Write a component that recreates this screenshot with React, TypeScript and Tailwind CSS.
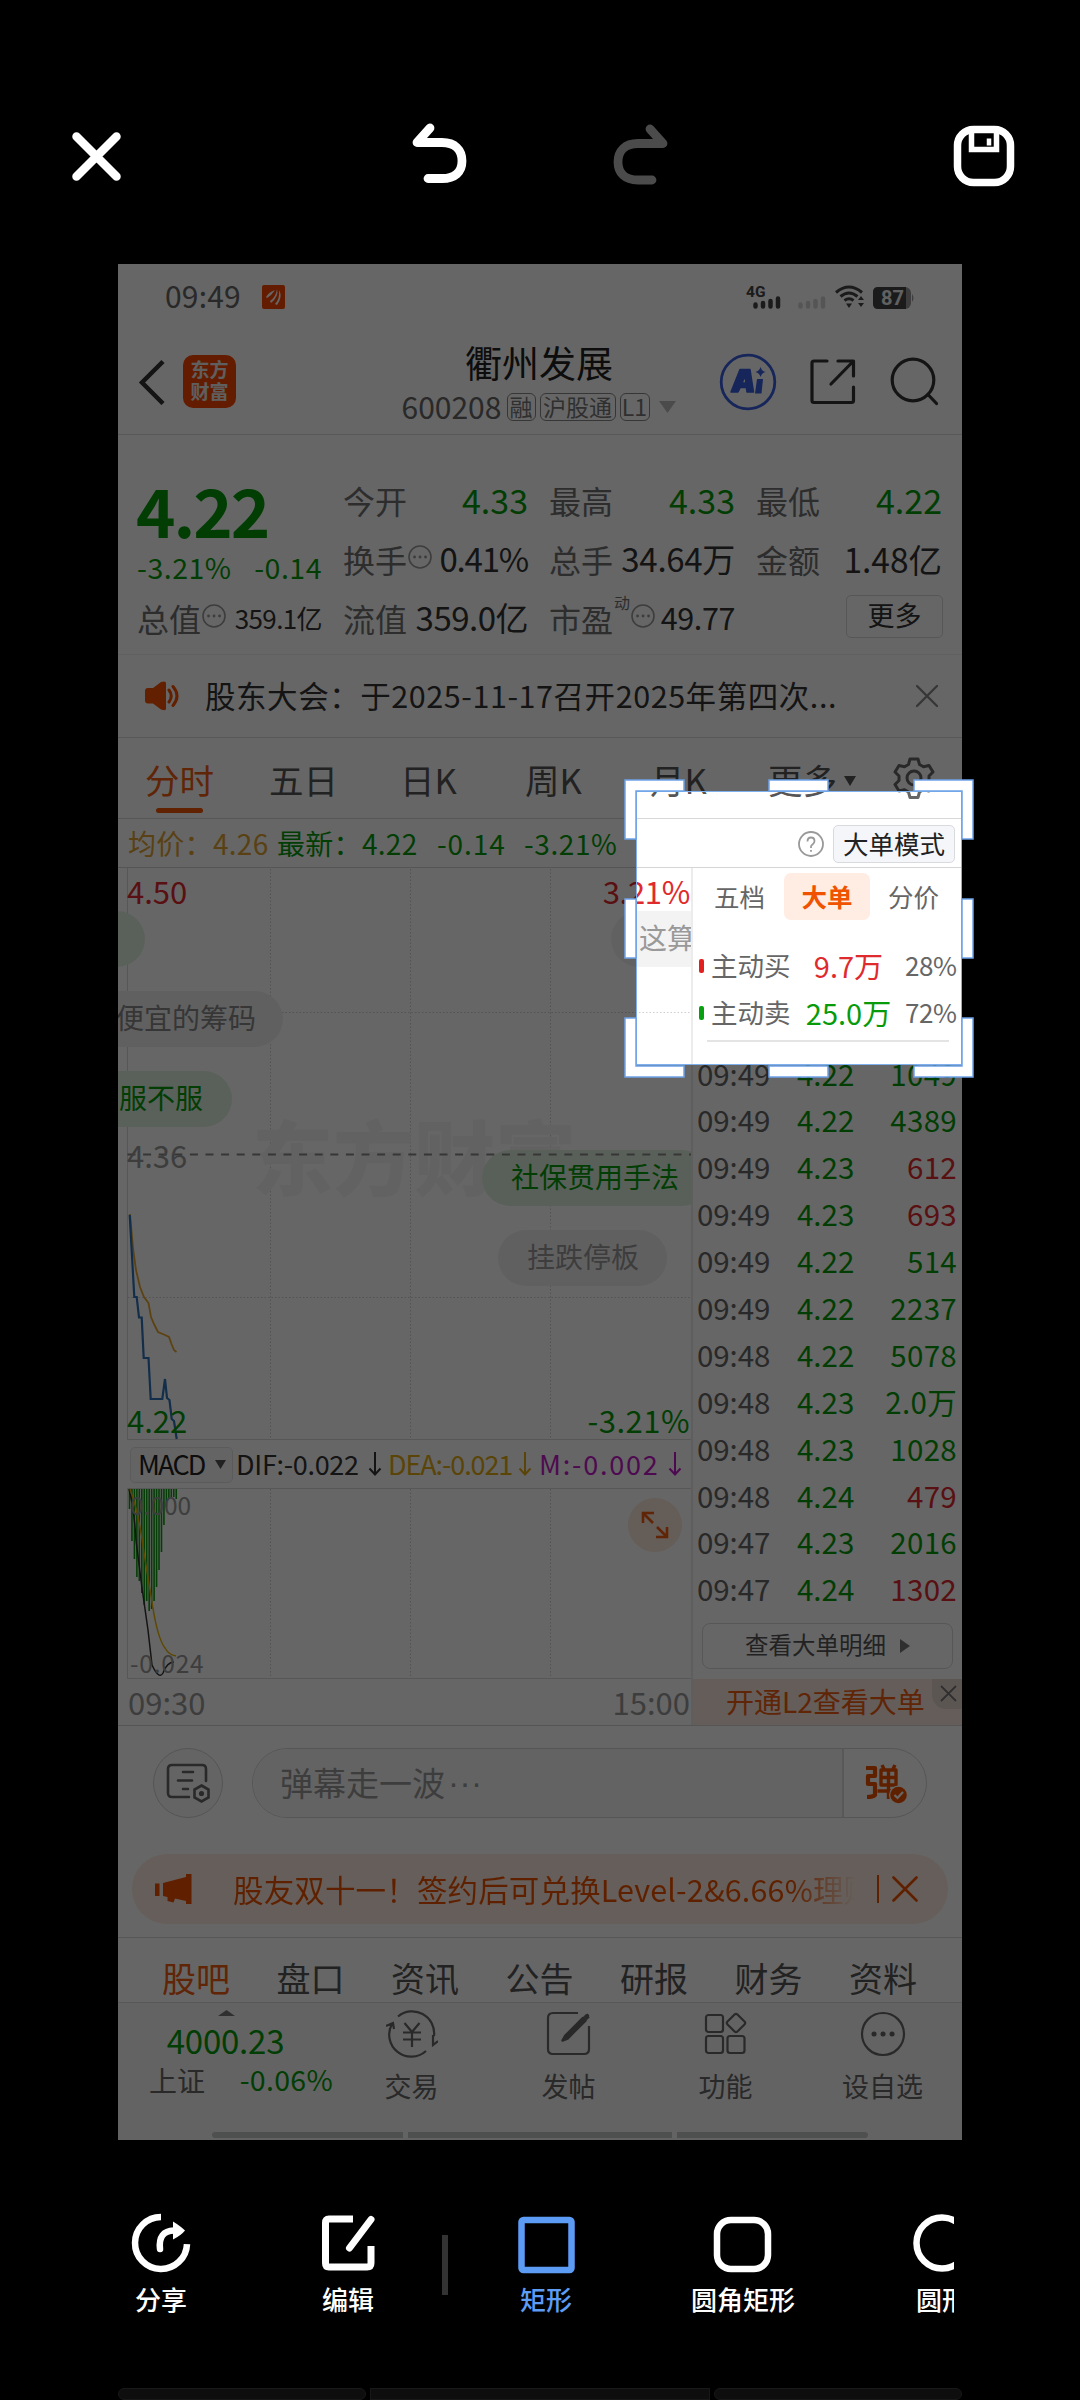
import React from "react";

const GREEN = "text-[#079b0b]";
const RED = "text-[#df2a2e]";

const trades = [
  ["09:49", "4.22", "1049", 0],
  ["09:49", "4.22", "4389", 0],
  ["09:49", "4.23", "612", 1],
  ["09:49", "4.23", "693", 1],
  ["09:49", "4.22", "514", 0],
  ["09:49", "4.22", "2237", 0],
  ["09:48", "4.22", "5078", 0],
  ["09:48", "4.23", "2.0万", 0],
  ["09:48", "4.23", "1028", 0],
  ["09:48", "4.24", "479", 1],
  ["09:47", "4.23", "2016", 0],
  ["09:47", "4.24", "1302", 1],
] as const;

function Dots() {
  return (
    <svg className="mb-1 h-6 w-6 shrink-0" viewBox="0 0 24 24" fill="none" stroke="#999" strokeWidth="1.6">
      <circle cx="12" cy="12" r="11" />
      <path d="M6.5 12h.1M12 12h.1M17.5 12h.1" strokeWidth="2.8" strokeLinecap="round" />
    </svg>
  );
}

function EditorTop() {
  return (
    <div className="flex h-[264px] w-full items-start pt-[118px] pl-[66px]">
      <svg className="h-[76px] w-[60px]" viewBox="0 0 60 76" fill="none" stroke="#fff" strokeWidth="8.500" strokeLinecap="round">
        <path d="M10.5 18.500l40 40M50.500 18.500l-40 40" />
      </svg>
      <svg className="ml-[280px] h-[76px] w-[70px]" viewBox="0 0 70 76" fill="none" stroke="#fff" strokeWidth="8.800" strokeLinecap="round" strokeLinejoin="round">
        <path d="M24 10L11 24.500H36C49 24.500 56 32 56 43S49 60.500 36 60.500H22" />
      </svg>
      <svg className="ml-[131px] h-[76px] w-[70px]" viewBox="0 0 70 76" fill="none" stroke="#4b4b4b" strokeWidth="8.800" strokeLinecap="round" strokeLinejoin="round">
        <path d="M43 11L56 25.500H31C18 25.500 11 33 11 44S18 62 31 62H45" />
      </svg>
      <svg className="ml-[271px] h-[76px] w-[70px]" viewBox="0 0 70 76" fill="none" stroke="#fff">
        <rect x="9.500" y="11.500" width="53" height="53" rx="16" strokeWidth="7.500" />
        <path d="M23.500 15V31.500H48.500V15" strokeWidth="5.500" />
        <path d="M41 20.500v7" strokeWidth="4.500" />
      </svg>
    </div>
  );
}

function StatusBar() {
  return (
    <div className="flex h-[66px] items-center pl-[47px] text-[#666]">
      <span className="w-[77px] pb-1 text-[30px] leading-none tracking-[0.2px]">09:49</span>
      <svg className="ml-[20px] h-6 w-[23px]" viewBox="0 0 23 24">
        <rect width="23" height="24" rx="2" fill="#fb4600" />
        <path d="M4 12Q7 7 13 5Q10 10 5 13ZM8 16Q14 12 15 4Q17 11 9 18ZM13 19Q18 14 17 5Q21 12 15 20Z" fill="#fff" />
      </svg>
      <svg className="ml-[461px] h-[34px] w-[180px]" viewBox="0 0 180 34">
        <text x="0" y="17" fontSize="15.500" fontWeight="700" fontFamily="Roboto" fill="#444">4G</text>
        <g stroke="#444" strokeWidth="4.500" strokeLinecap="round">
          <path d="M9.500 24.500v2M17 23v3.500M24.500 21v5.500M32 18.500v8" />
          <path d="M54.500 24.500v2M62 23v3.500M69.500 21v5.500M77 18.500v8" stroke="#d4d4d4" />
        </g>
        <g fill="none" stroke="#444" strokeWidth="3">
          <path d="M90 12.500Q103 1.500 116 12.500" />
          <path d="M94.500 16.500Q103 9.500 111.500 16.500" />
          <path d="M98.500 20.500Q103 17 107.500 20.500" />
        </g>
        <path d="M100 23.500h6l-3 4.500zM112 20l3-4 3 4zM112 23l3 4 3-4z" fill="#444" />
        <rect x="127" y="7" width="38" height="22" rx="6" fill="#999" />
        <path d="M166 14q3 4 0 8z" fill="#999" />
        <path d="M132 7h28v22h-28q-5 0-5-5V12q0-5 5-5z" fill="#444" />
        <text x="135" y="25" fontSize="20" fontWeight="700" fontFamily="Roboto" fill="#f3f3f3">87</text>
      </svg>
    </div>
  );
}

function Header() {
  const tag = "flex h-[28px] items-center justify-center rounded-[6px] border-[1.500px] border-[#888] pb-[2px] text-[23px] leading-none text-[#777]";
  return (
    <div className="flex h-[105px] items-center border-b border-[#dcdcdc] pl-[20px]">
      <svg className="h-[46px] w-[28px]" viewBox="0 0 28 46" fill="none" stroke="#333" strokeWidth="4.500">
        <path d="M25 2.500L4 23.500 25 44.500" />
      </svg>
      <div className="ml-[17px] flex h-[53px] w-[53px] flex-col items-center justify-center rounded-[10px] bg-[#fb4600] pb-[3px] text-[19px] leading-[22px] font-bold text-[#eee]">
        <span>东方</span>
        <span>财富</span>
      </div>
      <div className="ml-[165px] flex w-[275px] flex-col items-center pt-[5px]">
        <div className="pl-[1px] text-[37px] leading-[44px] text-[#222]">衢州发展</div>
        <div className="flex h-[44px] items-center pt-[2px]">
          <span className="w-[105px] pb-[3px] text-[30px] leading-none text-[#666]">600208</span>
          <span className={tag + " w-[29px]"}>融</span>
          <span className={tag + " ml-[4px] w-[76px]"}>沪股通</span>
          <span className={tag + " ml-[4px] w-[30px]"}>L1</span>
          <svg className="ml-[9px] h-[12px] w-[17px]" viewBox="0 0 17 12"><path d="M0 0h17L8.500 12z" fill="#bbb" /></svg>
        </div>
      </div>
      <svg className="ml-[43px] h-[60px] w-[58px]" viewBox="0 0 58 60">
        <circle cx="29" cy="30" r="26.800" fill="none" stroke="#3a5fe0" strokeWidth="2.800" />
        <path d="M21 17.500h10l3.500 22.500h-6.500l-.7-4.500h-6l-2.300 4.500H12zM26 24l-3 7h4z" fill="#3a5fe0" stroke="#3a5fe0" strokeWidth="1.500" strokeLinejoin="round" fillRule="evenodd" />
        <path d="M38 27h6l-1.500 14.500h-6.500zM41.500 15q1 4 5 5-4 1-5 5-1-4-5-5 4-1 5-5z" fill="#3a5fe0" />
      </svg>
      <svg className="ml-[32px] h-[48px] w-[48px]" viewBox="0 0 48 48" fill="none" stroke="#333" strokeWidth="3.200" strokeLinecap="round" strokeLinejoin="round">
        <path d="M18 3H5Q3 3 3 5V42.500q0 2 2 2H42.500q2 0 2-2V29M29 3H44.500V18M44 3.500L22 26" />
      </svg>
      <svg className="ml-[32px] h-[50px] w-[50px]" viewBox="0 0 50 50" fill="none" stroke="#333" strokeWidth="3.200" strokeLinecap="round">
        <circle cx="24" cy="23" r="20.800" />
        <path d="M39 37.500l8.500 9" />
      </svg>
    </div>
  );
}

function Cell({ label, children }: { label: React.ReactNode; children?: React.ReactNode }) {
  return (
    <div className="flex h-[59px] items-center justify-between pb-[3px] whitespace-nowrap">
      <span className="flex items-center gap-[1px] text-[32px] leading-none text-[#707070]">{label}</span>
      {children}
    </div>
  );
}

function Quote() {
  const g = "text-[34px] leading-none " + GREEN;
  const k = "text-[33.500px] leading-none text-[#333]";
  return (
    <div className="grid h-[221px] grid-cols-[185px_185px_186px_186px] gap-x-[21px] border-b border-[#f0f0f0] pt-[37px] pl-[19px]">
      <div>
        <div className={"-ml-[1px] flex h-[76px] items-center pb-[2px] text-[67px] leading-none font-bold tracking-[-2px] " + GREEN}>4.22</div>
        <div className={"flex h-[42px] items-center justify-between pb-[2px] text-[28.500px] leading-none tracking-[0.500px] " + GREEN}>
          <span>-3.21%</span>
          <span>-0.14</span>
        </div>
        <Cell label={<>总值<Dots /></>}>
          <span className="text-[26px] leading-none tracking-[-0.600px] text-[#333]">359.1亿</span>
        </Cell>
      </div>
      <div>
        <Cell label="今开"><span className={g}>4.33</span></Cell>
        <Cell label={<>换手<Dots /></>}><span className="text-[33px] leading-none tracking-[-1.200px] text-[#333]">0.41%</span></Cell>
        <Cell label="流值"><span className="text-[33px] leading-none tracking-[-0.500px] text-[#333]">359.0亿</span></Cell>
      </div>
      <div>
        <Cell label="最高"><span className={g}>4.33</span></Cell>
        <Cell label="总手"><span className="text-[33px] leading-none tracking-[-0.300px] text-[#333]">34.64万</span></Cell>
        <Cell label={<>市盈<span className="mb-8 text-[16px]">动</span><Dots /></>}><span className="text-[30.500px] leading-none tracking-[-0.400px] text-[#333]">49.77</span></Cell>
      </div>
      <div>
        <Cell label="最低"><span className={g}>4.22</span></Cell>
        <Cell label="金额"><span className={k}>1.48亿</span></Cell>
        <div className="ml-[90px] mt-[5px] flex h-[43px] w-[97px] items-center justify-center rounded-[5px] border border-[#d8d8d8] pb-[4px] text-[27px] leading-none text-[#333]">更多</div>
      </div>
    </div>
  );
}

function Notice() {
  return (
    <div className="flex h-[83px] items-center border-b border-[#ddd] pl-[26px]">
      <svg className="h-[30px] w-[36px]" viewBox="0 0 36 30">
        <path d="M1 10q0-3 3-3h5l8-6q5-1.500 5 1v26q0 2-5 .5L9 22.500H4q-3 0-3-3z" fill="#f55000" />
        <path d="M25 9q4.500 6 0 12M29 5.500q8 9.500 0 19" fill="none" stroke="#f55000" strokeWidth="3" strokeLinecap="round" />
      </svg>
      <span className="ml-[25px] w-[642px] pb-[2px] text-[30.500px] leading-none tracking-[0.560px] whitespace-nowrap text-[#333]">股东大会：于2025-11-17召开2025年第四次...</span>
      <svg className="ml-[68px] h-[24px] w-[24px]" viewBox="0 0 24 24" stroke="#888" strokeWidth="2.300" strokeLinecap="round"><path d="M2 2l20 20M22 2L2 22" /></svg>
    </div>
  );
}

function ChartTabs() {
  return (
    <div className="flex h-[81px] items-start border-b border-[#d8d8d8] pt-[22px] text-[34.500px] leading-[38px] whitespace-nowrap text-[#555]">
      <div className="ml-[26px] flex w-[71px] flex-col items-center text-[#ee5c10]">
        <span>分时</span>
        <span className="mt-[10px] h-[5px] w-[47px] rounded-full bg-[#f05500]" />
      </div>
      <span className="ml-[54px] w-[72px]">五日</span>
      <span className="ml-[59px] w-[60px]">日K</span>
      <span className="ml-[65px] w-[60px]">周K</span>
      <span className="ml-[65px] w-[60px]">月K</span>
      <span className="ml-[58px] w-[71px]">更多</span>
      <svg className="mt-[16px] ml-[5px] h-[11px] w-[12px]" viewBox="0 0 12 11"><path d="M0 0h12L6 10z" fill="#555" /></svg>
      <svg className="-mt-[3px] ml-[37px] h-[42px] w-[42px]" viewBox="0 0 42 42" fill="none" stroke="#666" strokeWidth="3" strokeLinejoin="round">
        <path d="M17 2h8l1.500 5.500 4 2.300L36 8.500l4 6.500-4 4v4.500l4 4-4 6.500-5.500-1.300-4 2.300L25 40.500h-8L15.500 35l-4-2.300L6 34l-4-6.500 4-4V19l-4-4 4-6.500 5.500 1.300 4-2.300z" />
        <circle cx="21" cy="21" r="7" />
      </svg>
    </div>
  );
}

function AvgRow() {
  return (
    <div className="flex h-[49px] items-center border-b border-[#d5d5d5] pt-[2px] pl-[10px] text-[28px] leading-none whitespace-nowrap">
      <span className="w-[149px] pb-[1px] tracking-[0.300px] text-[#e0a233]">均价：4.26</span>
      <span className={"w-[142px] pb-[1px] tracking-[0.300px] " + GREEN}>最新：4.22</span>
      <span className={"ml-[18px] w-[87px] pb-[1px] tracking-[0.900px] " + GREEN}>-0.14</span>
      <span className={"w-[101px] pb-[1px] tracking-[0.600px] " + GREEN}>-3.21%</span>
      <svg className="ml-[173px] h-[26px] w-[26px]" viewBox="0 0 26 26" fill="none" stroke="#999" strokeWidth="1.800">
        <circle cx="13" cy="13" r="12" />
        <path d="M9.500 10.500q0-4 3.500-4t3.500 3.500q0 2-2 3.500T13 16v1M13 19v1.800" />
      </svg>
      <span className="ml-[9px] flex h-[38px] w-[122px] items-center justify-center rounded-[5px] border border-[#d8dade] bg-[#f5f6fa] pb-[2px] text-[25.500px] text-[#222]">大单模式</span>
    </div>
  );
}

function Bubble({ className, children }: { className: string; children?: React.ReactNode }) {
  return <div className={"absolute flex h-[56px] items-center rounded-full pb-[3px] text-[28px] leading-none whitespace-nowrap " + className}>{children}</div>;
}

const macdBars = [20, 52, 70, 88, 92, 104, 116, 112, 122, 120, 112, 98, 81, 63, 36, 18, 10, 8, 8, 10];

/* Minute chart with its MACD pane; free labels lie over the canvas. */
function Chart() {
  return (
    <div className="relative h-[857px] w-[573px] overflow-hidden">
      <svg className="absolute top-0 left-0 h-[857px] w-[573px]" viewBox="0 0 573 857" fill="none">
        <path d="M9.500 0V571.500H573M9.500 620.500H573M9.500 620.500V810.500H573" stroke="#d9d9d9" strokeWidth="1" />
        <path
          d="M152.500 1V571M292.500 1V571M432.500 1V571M152.500 621V810M292.500 621V810M432.500 621V810M10 144.500H573M10 429.500H573"
          stroke="#cfcfcf"
          strokeWidth="1"
          strokeDasharray="1.500 2"
        />
      </svg>
      <div className="absolute top-[236px] left-[134px] text-[81px] leading-[100px] font-black whitespace-nowrap text-[#f6f6f6]">东方财富</div>
      <Bubble className="top-[43px] left-[-60px] w-[87px] bg-[#e2f2e3]" />
      <Bubble className="top-[43px] left-[493px] w-[140px] bg-[#f3f3f3] pl-[28px] text-[#999]">这算</Bubble>
      <Bubble className="top-[123px] left-[-60px] w-[225px] bg-[#f1f1f1] pl-[58px] text-[#888]">便宜的筹码</Bubble>
      <Bubble className={"top-[203px] left-[-60px] w-[174px] bg-[#e2f2e3] pl-[61px] " + GREEN}>服不服</Bubble>
      <Bubble className={"top-[282px] left-[364px] w-[228px] bg-[#dcefdd]/90 pl-[29px] " + GREEN}>社保贯用手法</Bubble>
      <Bubble className="top-[362px] left-[380px] w-[169px] bg-[#f0f0f0] pl-[29px] text-[#999]">挂跌停板</Bubble>
      <svg className="absolute top-0 left-0 h-[857px] w-[573px]" viewBox="0 0 573 857" fill="none">
        <path d="M9.500 286.500H573" stroke="#888" strokeWidth="1.800" strokeDasharray="8 7.600" />
        <path d="M12 346L15 380 18 402 22 419 26 429 30.500 435 33 449 36 456 40 464 47 467 51 469 53.500 476 56 482 58.500 484" stroke="#e5a52d" strokeWidth="1.800" />
        <path d="M11.700 347L16.300 429H18.700L21 449.500H23.700L25.700 490H30.500L32.700 531H44.300L47 511 49 530 51.500 532 53.700 551 56 553 58.700 571" stroke="#2e73b8" strokeWidth="2.200" />
        <g stroke="#0b9a0e" strokeWidth="1.600">
          {macdBars.map((h, i) => (
            <path key={i} d={`M${11.5 + i * 2.46} 621v${h}`} />
          ))}
        </g>
        <path d="M11 621Q16 640 18 672L24 720 30 762 34 797Q41 812 45 805Q49 794 56 794" stroke="#333" strokeWidth="1.500" />
        <path d="M12 621Q21 645 26 685L33 728Q39 770 47 780Q51 787 58 788" stroke="#e8b300" strokeWidth="1.500" />
      </svg>
      <span className={"absolute top-[7px] left-[9px] text-[31px] leading-[31px] " + RED}>4.50</span>
      <span className={"absolute top-[7px] right-[1px] text-[31px] leading-[31px] tracking-[-0.300px] " + RED}>3.21%</span>
      <span className="absolute top-[271px] left-[9px] text-[31px] leading-[31px] text-[#999]">4.36</span>
      <span className={"absolute top-[536px] left-[9px] text-[31px] leading-[31px] " + GREEN}>4.22</span>
      <span className={"absolute top-[536px] right-[1px] text-[31px] leading-[31px] tracking-[0.500px] " + GREEN}>-3.21%</span>
      <span className="absolute top-[624px] left-[12px] text-[24.500px] leading-[25px] text-[#999]">0.000</span>
      <span className="absolute top-[782px] left-[12px] text-[24.500px] leading-[25px] tracking-[0.800px] text-[#999]">-0.024</span>
      <div className="absolute top-[573px] left-[12px] flex h-[48px] w-[561px] items-center text-[27px] leading-none whitespace-nowrap">
        <span className="flex h-[36px] w-[103px] shrink-0 items-center rounded-[5px] border border-[#e3e3e3] bg-[#fafafa] pb-[2px] pl-[7px] text-[#222]">
          <span className="w-[77px] tracking-[-1.800px]">MACD</span>
          <svg className="mt-[1px] h-[9px] w-[11px]" viewBox="0 0 11 9"><path d="M0 0h11L5.500 9z" fill="#555" /></svg>
        </span>
        <span className="flex w-[155px] shrink-0 items-center pb-[2px] pl-[3px] tracking-[-0.300px] text-[#333]"><span className="w-[132px]">DIF:-0.022</span><Down /></span>
        <span className="flex w-[151px] shrink-0 items-center pb-[2px] tracking-[-1.100px] text-[#e3ab12]"><span className="w-[130px]">DEA:-0.021</span><Down /></span>
        <span className="flex w-[151px] shrink-0 items-center pb-[2px] tracking-[1.800px] text-[#c41bc8]"><span className="w-[129px]">M:-0.002</span><Down /></span>
      </div>
      <div className="absolute top-[630px] left-[510px] flex h-[54px] w-[54px] items-center justify-center rounded-full bg-[#fde8dc]">
        <svg className="h-[28px] w-[28px]" viewBox="0 0 28 28" fill="none" stroke="#f05a10" strokeWidth="2.600"><path d="M2 12V2h11M2 2l10 10M26 16v10H15M26 26L16 16" /></svg>
      </div>
      <div className="absolute top-[811px] left-[10px] flex h-[46px] w-[562px] items-center justify-between pb-[1px] text-[31px] leading-none text-[#999]">
        <span>09:30</span>
        <span>15:00</span>
      </div>
    </div>
  );
}

function Down() {
  return (
    <svg className="h-[24px] w-[14px]" viewBox="0 0 14 24" fill="none" stroke="currentColor" strokeWidth="2"><path d="M7 0V22M1.500 16.500L7 22.500l5.500-6" /></svg>
  );
}

function Orders() {
  return (
    <div className="flex h-[857px] w-[271px] flex-col border-l-2 border-[#ececec]">
      <div className="flex h-[58px] items-center pl-[18px] text-[25.500px] leading-none whitespace-nowrap text-[#666]">
        <span className="w-[73px] pb-[2px] pl-[3px]">五档</span>
        <span className="flex h-[47px] w-[86px] items-center justify-center rounded-[7px] bg-[#ffece2] pb-[2px] font-bold text-[#ef5300]">大单</span>
        <span className="ml-[18px] pb-[2px]">分价</span>
      </div>
      <div className="mt-[17px] flex h-[47px] items-center pl-[6px] text-[26.500px] leading-none whitespace-nowrap text-[#666]">
        <span className="h-[14px] w-[5px] rounded-[2px] bg-[#e32020]" />
        <span className="ml-[7px] w-[81px] pb-[2px]">主动买</span>
        <span className={"w-[113px] pb-[2px] text-center text-[29px] " + RED}>9.7万</span>
        <span className="w-[50px] pb-[2px] text-right text-[26px] tracking-[-0.400px]">28%</span>
      </div>
      <div className="flex h-[47px] items-center pl-[6px] text-[26.500px] leading-none whitespace-nowrap text-[#666]">
        <span className="h-[14px] w-[5px] rounded-[2px] bg-[#08a010]" />
        <span className="ml-[7px] w-[81px] pb-[2px]">主动卖</span>
        <span className={"w-[113px] pb-[2px] text-center text-[29px] " + GREEN}>25.0万</span>
        <span className="w-[50px] pb-[2px] text-right text-[26px] tracking-[-0.400px]">72%</span>
      </div>
      <div className="mt-[3px] ml-[14px] h-[2px] w-[242px] bg-[#e4e4e4]" />
      <div className="mt-[9px] flex flex-col">
        {trades.map(([t, p, v, up], i) => (
          <div key={i} className="flex h-[46.900px] items-center pb-[2px] pl-[4px] text-[29.500px] leading-none">
            <span className="w-[100px] tracking-[-0.100px] text-[#666]">{t}</span>
            <span className={"w-[70px] " + GREEN}>{p}</span>
            <span className={"w-[90px] text-right tracking-[0.300px] " + (up ? RED : GREEN)}>{v}</span>
          </div>
        ))}
      </div>
      <div className="mt-[9px] ml-[9px] flex h-[46px] w-[251px] items-center justify-center rounded-[8px] border border-[#d9d9d9] pb-[2px] text-[23.500px] leading-none text-[#555]">
        查看大单明细
        <svg className="mt-[2px] ml-[14px] h-[14px] w-[10px]" viewBox="0 0 10 14"><path d="M0 0v14l10-7z" fill="#777" /></svg>
      </div>
      <div className="mt-auto flex h-[46px] items-center justify-between bg-[#fbe9df] pl-[33px]">
        <span className="pb-[1px] text-[28px] leading-none whitespace-nowrap text-[#ee5c10]">开通L2查看大单</span>
        <span className="flex h-[30px] w-[30px] items-center justify-center self-start rounded-bl-[14px] bg-[#e6d8d0] pl-[2px]">
          <svg className="h-[17px] w-[17px]" viewBox="0 0 17 17" stroke="#777" strokeWidth="1.800"><path d="M1 1l15 15M16 1L1 16" /></svg>
        </span>
      </div>
    </div>
  );
}

function Danmu() {
  return (
    <div className="flex h-[128px] items-start pt-[22px] pl-[35px]">
      <div className="flex h-[70px] w-[70px] items-center justify-center rounded-full border border-[#d2d2d2] bg-[#fafafa]">
        <svg className="h-[42px] w-[44px]" viewBox="0 0 44 42" fill="none" stroke="#666" strokeWidth="2.600" strokeLinecap="round">
          <path d="M23 35H6q-4 0-4-4V7q0-4 4-4H36q4 0 4 4V19" />
          <path d="M17 10h10M12 18.500h14M17 27h5" />
          <path d="M35.500 23.500l7 4v8l-7 4-7-4v-8z" />
          <circle cx="35.500" cy="31.500" r="1.300" fill="#666" />
        </svg>
      </div>
      <div className="ml-[29px] flex h-[70px] w-[675px] overflow-hidden rounded-full border border-[#d5d5d5]">
        <div className="flex w-[591px] items-center border-r-2 border-[#ddd] bg-[#f8f8f8] pb-[1px] pl-[27px] text-[33px] leading-none text-[#999]">弹幕走一波<span className="ml-[3px] font-['Liberation_Sans',sans-serif] tracking-[0.500px]">···</span></div>
        <div className="flex items-center pl-[20px]">
          <svg className="h-[44px] w-[44px]" viewBox="0 0 44 44">
            <g fill="none" stroke="#ee5200" strokeWidth="4.200" strokeLinejoin="round">
              <path d="M2 7H11V15H4V23H11V34Q9 36 3 36" />
              <path d="M17 9H32V24H17ZM24.500 8V38M17 16.500H32M13.500 30H30M18 4l2 4M31 4l-2 4" strokeWidth="3.400" />
            </g>
            <circle cx="34.500" cy="34" r="9.500" fill="#fff" />
            <circle cx="34.500" cy="34" r="8.300" fill="#ee5200" />
            <path d="M30.500 34l3 3 5.500-6" fill="none" stroke="#fff" strokeWidth="2.200" />
          </svg>
        </div>
      </div>
    </div>
  );
}

function Promo() {
  return (
    <div className="flex h-[85px] items-start border-b border-[#d9d9d9] pl-[14px]">
      <div className="flex h-[70px] w-[816px] items-center rounded-full bg-[#fdebe0] pl-[23px]">
        <svg className="h-[32px] w-[37px]" viewBox="0 0 37 32" fill="#f05000"><path d="M0 10.500h4.500v12.500H0zM8 10L31 4V1h5.500v30H31v-3l-11-2.500-1.500 4-6-1.500V24L8 23z" /></svg>
        <div className="ml-[41px] flex h-[50px] w-[635px] items-center overflow-hidden text-[30.500px] leading-[44px] whitespace-nowrap">
          <span className="inline-block w-[635px] overflow-hidden bg-linear-to-r from-[#ee5200] from-88% to-[#ee5200]/0 to-98% bg-clip-text tracking-[0.150px] text-transparent">股友双十一！签约后可兑换Level-2&6.66%理财</span>
        </div>
        <span className="ml-[9px] h-[28px] w-[1.500px] shrink-0 bg-[#ee5200]" />
        <svg className="ml-[13px] h-[26px] w-[26px]" viewBox="0 0 26 26" stroke="#ee5200" strokeWidth="2.600" strokeLinecap="round"><path d="M1.500 1.500l23 23M24.500 1.500l-23 23" /></svg>
      </div>
    </div>
  );
}

function InfoTabs() {
  return (
    <div className="flex h-[65px] items-center justify-between border-b border-[#dcdcdc] pt-[16px] pr-[45px] pl-[44px] text-[34px] leading-none text-[#555]">
      <span className="text-[#ee5c10]">股吧</span>
      <span>盘口</span>
      <span>资讯</span>
      <span>公告</span>
      <span>研报</span>
      <span>财务</span>
      <span>资料</span>
    </div>
  );
}

function NavItem({ label, children }: { label: string; children: React.ReactNode }) {
  return (
    <div className="flex w-[157px] flex-col items-center pt-[6px] text-[27px] leading-[36px] text-[#666]">
      <svg className="mb-[9px] h-[50px] w-[52px]" viewBox="0 0 52 50" fill="none" stroke="#666" strokeWidth="2.200">{children}</svg>
      {label}
    </div>
  );
}

function BottomBar() {
  return (
    <div className="flex h-[137px] flex-col bg-[#f8f8f8]">
      <div className="flex h-[129px] pl-[29px]">
        <div className="flex w-[186px] flex-col items-center pt-[7px] leading-none whitespace-nowrap">
          <svg className="mr-[28px] h-[6px] w-[17px]" viewBox="0 0 17 6"><path d="M0 6h17L8.500 0z" fill="#777" /></svg>
          <span className={"mt-[8px] mr-[29px] text-[33px] tracking-[-0.200px] " + GREEN}>4000.23</span>
          <div className="mt-[8px] flex w-[186px] items-center justify-between pl-[2px]">
            <span className="text-[28px] text-[#666]">上证</span>
            <span className={"text-[28.500px] tracking-[0.300px] " + GREEN}>-0.06%</span>
          </div>
        </div>
        <NavItem label="交易">
          <path d="M12 7.500A22 22 0 0 1 48 27M40 42A22 22 0 0 1 6 15M0 17l7-3 1 6M52 32l-5 4V26" />
          <path d="M18.500 14l7.500 9 7.500-9M17 23.500h18M17 30.500h18M26 23v15" />
        </NavItem>
        <NavItem label="发帖">
          <path d="M35 4H10Q5 4 5 9V40q0 5 5 5H41q5 0 5-5V17" />
          <path d="M19.500 31.500L22 27 40 9l2.500 2.500L24.500 29.500zM43 8l2.500-2.500" fill="#666" strokeWidth="2.500" strokeLinejoin="round" />
          <path d="M42 9.500l3-3" strokeWidth="5" />
        </NavItem>
        <NavItem label="功能">
          <rect x="6" y="6" width="17" height="17" rx="2.500" />
          <rect x="6" y="27" width="17" height="17" rx="2.500" />
          <rect x="27.500" y="27" width="17" height="17" rx="2.500" />
          <rect x="29" y="7" width="14" height="14" rx="2" transform="rotate(45 36 14)" />
        </NavItem>
        <NavItem label="设自选">
          <circle cx="26" cy="25" r="21" />
          <path d="M17 25h.1M26 25h.1M35 25h.1" strokeWidth="5" strokeLinecap="round" />
        </NavItem>
      </div>
      <div className="flex h-[6px] gap-[5px] pl-[94px]">
        <span className="w-[191px] rounded-l-full bg-[#c3c7c5]" />
        <span className="w-[264px] bg-[#c3c7c5]" />
        <span className="w-[191px] rounded-r-full bg-[#c3c7c5]" />
      </div>
    </div>
  );
}

/* Crop selection: dims everything outside of the frame. */
function CropFrame() {
  return (
    <>
      <div className="absolute inset-0 overflow-hidden">
        <div className="absolute top-[527px] left-[519px] h-[274px] w-[325px] shadow-[0_0_0_3000px_rgba(0,0,0,0.6)]" />
      </div>
      <div className="absolute top-[527px] left-[518px] h-[274px] w-[326px] border border-[#7fb0ee]">
        <svg className="absolute top-[-13px] left-[-13px] h-[300px] w-[350px]" viewBox="0 0 350 300" fill="#fff" stroke="#6ea3e8" strokeWidth="1.500">
          <path d="M1 1H60V12H12V60H1z" />
          <path d="M349 1H290V12H338V60H349z" />
          <path d="M1 298H60V287H12V239H1z" />
          <path d="M349 298H290V287H338V239H349z" />
          <path d="M145 1h59v11h-59zM145 287h59v11h-59zM1 120h11v59H1zM338 120h11v59h-11z" />
        </svg>
      </div>
    </>
  );
}

function Tool({ label, className, children }: { label: string; className: string; children: React.ReactNode }) {
  return (
    <div className={"flex shrink-0 flex-col items-center text-[26px] leading-[38px] font-medium whitespace-nowrap " + className}>
      <svg className="mb-[5px] h-[64px] w-[64px]" viewBox="0 0 64 64" fill="none" stroke="currentColor" strokeWidth="6.500">{children}</svg>
      {label}
    </div>
  );
}

function Toolbar() {
  return (
    <div className="flex h-[248px] w-full items-start pt-[71px] pl-[108px] text-white">
      <Tool label="分享" className="w-[106px]">
        <path d="M32 6A26 26 0 1 0 58 33" />
        <path d="M31 38Q29 20 45 19.500" strokeLinecap="round" />
        <path d="M44 10.500q8 5 12 9-4 5-12 9z" fill="currentColor" stroke="none" />
      </Tool>
      <Tool label="编辑" className="ml-[81px] w-[106px]">
        <path d="M37 8H13Q9.500 8 9.500 12V52q0 4 3.500 4H51q4 0 4-4V35" strokeWidth="7" />
        <path d="M55 8.500L33.500 37" strokeWidth="7" strokeLinecap="round" />
      </Tool>
      <span className="mt-[24px] ml-[41px] h-[60px] w-[6px] bg-[#333]" />
      <Tool label="矩形" className="ml-[45px] w-[106px] text-[#5c9cf5]">
        <rect x="7.500" y="9" width="50" height="50" rx="2" />
      </Tool>
      <Tool label="圆角矩形" className="ml-[90px] w-[108px]">
        <rect x="6" y="9" width="51" height="49" rx="14" />
      </Tool>
      <div className="ml-[92px] w-[65px] overflow-hidden">
        <Tool label="圆形" className="w-[106px]">
          <circle cx="32" cy="32" r="25.500" />
        </Tool>
      </div>
    </div>
  );
}

export default function App() {
  return (
    <div className="flex h-[2400px] w-[1080px] flex-col items-center overflow-hidden bg-black font-['Noto_Sans_CJK_SC',sans-serif]">
      <EditorTop />
      <div className="relative h-[1876px] w-[844px] shrink-0 bg-white">
        <div className="flex h-full flex-col overflow-hidden">
          <StatusBar />
          <Header />
          <Quote />
          <Notice />
          <ChartTabs />
          <AvgRow />
          <div className="flex h-[858px] shrink-0 border-b border-[#d5d5d5]">
            <Chart />
            <Orders />
          </div>
          <Danmu />
          <Promo />
          <InfoTabs />
          <BottomBar />
        </div>
        <CropFrame />
      </div>
      <Toolbar />
      <div className="flex h-[12px] w-[844px] gap-[4px]">
        <span className="w-[248px] rounded-full border border-[#181818] bg-[#0e0e0e]" />
        <span className="w-[340px] border border-[#181818] bg-[#0e0e0e]" />
        <span className="w-[248px] rounded-full border border-[#181818] bg-[#0e0e0e]" />
      </div>
    </div>
  );
}
